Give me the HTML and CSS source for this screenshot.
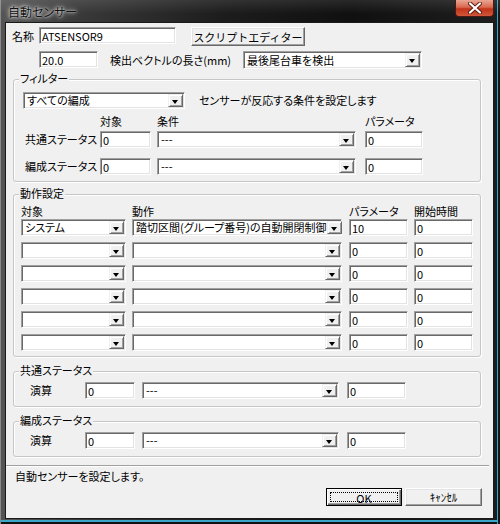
FILE: index.html
```html
<!DOCTYPE html>
<html lang="ja">
<head>
    <meta charset="UTF-8">
    <title>自動センサー</title>
    <link rel="stylesheet" href="styles.css">
</head>
<body>
    <div class="window">
        <div class="titlebar">
            <span class="title">自動センサー</span>
            <span class="close-btn">
                <svg width="16" height="12" viewBox="0 0 16 12">
                    <path d="M3 1.5 L13 10.5 M13 1.5 L3 10.5" stroke="#5a1a10" stroke-width="4" stroke-linecap="round"/>
                    <path d="M3 1.5 L13 10.5 M13 1.5 L3 10.5" stroke="#fff" stroke-width="2.2" stroke-linecap="round"/>
                </svg>
            </span>
        </div>

        <div class="client">
            <div class="row row-name">
                <span class="lbl lbl-name">名称</span>
                <input class="edit edit-name" type="text" value="ATSENSOR9">
                <button class="btn btn-script">スクリプトエディター</button>
            </div>

            <div class="row row-vec">
                <input class="edit edit-len" type="text" value="20.0">
                <span class="lbl lbl-len">検出ベクトルの長さ(mm)</span>
                <div class="combo combo-detect"><span class="combo-text">最後尾台車を検出</span><span class="drop"></span></div>
            </div>

            <!-- フィルター -->
            <div class="group group-filter">
                <span class="group-title">フィルター</span>
                <div class="filter-top">
                    <div class="combo combo-train"><span class="combo-text">すべての編成</span><span class="drop"></span></div>
                    <span class="lbl filter-note">センサーが反応する条件を設定します</span>
                </div>
                <div class="line cols-filter head">
                    <span></span>
                    <span>対象</span>
                    <span>条件</span>
                    <span>パラメータ</span>
                </div>
                <div class="line cols-filter first">
                    <span class="lbl">共通ステータス</span>
                    <input class="edit w51" type="text" value="0">
                    <div class="combo w199"><span class="combo-text">---</span><span class="drop"></span></div>
                    <input class="edit w58" type="text" value="0">
                </div>
                <div class="line cols-filter second">
                    <span class="lbl">編成ステータス</span>
                    <input class="edit w51" type="text" value="0">
                    <div class="combo w199"><span class="combo-text">---</span><span class="drop"></span></div>
                    <input class="edit w58" type="text" value="0">
                </div>
            </div>

            <!-- 動作設定 -->
            <div class="group group-action">
                <span class="group-title">動作設定</span>
                <div class="line cols-action head">
                    <span>対象</span>
                    <span>動作</span>
                    <span>パラメータ</span>
                    <span>開始時間</span>
                </div>
                <div class="line cols-action act first">
                    <div class="combo w105"><span class="combo-text">システム</span><span class="drop"></span></div>
                    <div class="combo w210"><span class="combo-text">踏切区間(グループ番号)の自動開閉制御</span><span class="drop"></span></div>
                    <input class="edit w59" type="text" value="10">
                    <input class="edit w59" type="text" value="0">
                </div>
                <div class="line cols-action act">
                    <div class="combo w105"><span class="combo-text"></span><span class="drop"></span></div>
                    <div class="combo w210"><span class="combo-text"></span><span class="drop"></span></div>
                    <input class="edit w59" type="text" value="0">
                    <input class="edit w59" type="text" value="0">
                </div>
                <div class="line cols-action act">
                    <div class="combo w105"><span class="combo-text"></span><span class="drop"></span></div>
                    <div class="combo w210"><span class="combo-text"></span><span class="drop"></span></div>
                    <input class="edit w59" type="text" value="0">
                    <input class="edit w59" type="text" value="0">
                </div>
                <div class="line cols-action act">
                    <div class="combo w105"><span class="combo-text"></span><span class="drop"></span></div>
                    <div class="combo w210"><span class="combo-text"></span><span class="drop"></span></div>
                    <input class="edit w59" type="text" value="0">
                    <input class="edit w59" type="text" value="0">
                </div>
                <div class="line cols-action act">
                    <div class="combo w105"><span class="combo-text"></span><span class="drop"></span></div>
                    <div class="combo w210"><span class="combo-text"></span><span class="drop"></span></div>
                    <input class="edit w59" type="text" value="0">
                    <input class="edit w59" type="text" value="0">
                </div>
                <div class="line cols-action act">
                    <div class="combo w105"><span class="combo-text"></span><span class="drop"></span></div>
                    <div class="combo w210"><span class="combo-text"></span><span class="drop"></span></div>
                    <input class="edit w59" type="text" value="0">
                    <input class="edit w59" type="text" value="0">
                </div>
            </div>

            <!-- 共通ステータス -->
            <div class="group group-status">
                <span class="group-title">共通ステータス</span>
                <div class="line cols-status">
                    <span class="lbl">演算</span>
                    <input class="edit w50" type="text" value="0">
                    <div class="combo w197"><span class="combo-text">---</span><span class="drop"></span></div>
                    <input class="edit w59" type="text" value="0">
                </div>
            </div>

            <!-- 編成ステータス -->
            <div class="group group-status">
                <span class="group-title">編成ステータス</span>
                <div class="line cols-status">
                    <span class="lbl">演算</span>
                    <input class="edit w50" type="text" value="0">
                    <div class="combo w197"><span class="combo-text">---</span><span class="drop"></span></div>
                    <input class="edit w59" type="text" value="0">
                </div>
            </div>

            <div class="separator"></div>
            <div class="status-text">自動センサーを設定します。</div>

            <div class="button-row">
                <button class="btn btn-default"><span class="focus">OK</span></button>
                <button class="btn btn-cancel">ｷｬﾝｾﾙ</button>
            </div>
        </div>
    </div>
</body>
</html>
```

FILE: styles.css
```css
body {
    margin: 0;
    background-color: #000;
    font-family: "Noto Sans CJK JP", "DejaVu Sans", sans-serif;
    font-size: 11px;
    font-feature-settings: "palt";
    color: #000;
}

.window {
    width: 500px;
    height: 524px;
    box-sizing: border-box;
    display: flex;
    flex-direction: column;
    padding: 0 7px 6px 6px;
    background: linear-gradient(to right, #555 0%, #3a3a3a 15%, #1c1c1c 45%, #101010 70%, #1e1e1e 100%);
    box-shadow: inset 1px 0 0 #8a8a8a, inset -2px 0 0 #151515, inset -3px 0 0 #3aa6c8,
                inset 0 -2px 0 #111, inset 0 -4px 0 #3aa6c8;
}

/* title bar */
.titlebar {
    height: 23px;
    margin: 0 -7px 0 -6px;
    padding-left: 8px;
    display: flex;
    justify-content: space-between;
    align-items: flex-start;
    background: linear-gradient(to bottom, rgba(255,255,255,0.10), rgba(255,255,255,0) 60%);
}

.title {
    line-height: 23px;
    font-size: 12px;
    color: #111;
    text-shadow: 0 0 4px #d8d8d8, 0 0 6px #bbb, 0 0 2px #eee;
}

.close-btn {
    width: 39px;
    height: 17px;
    margin-right: 6px;
    box-sizing: border-box;
    border: 1px solid #4a1a14;
    border-top: none;
    border-radius: 0 0 4px 4px;
    background: linear-gradient(to bottom, #e9a795 0%, #d9694e 45%, #c2341a 55%, #d2553a 100%);
    display: flex;
    align-items: center;
    justify-content: center;
}

/* client area */
.client {
    flex: 1;
    background-color: #f0f0f0;
    padding-top: 4px;
    box-shadow: 0 0 0 1px #1a1a1a;
}

.row {
    display: flex;
    align-items: flex-start;
}

.lbl {
    line-height: 17px;
    white-space: nowrap;
}

.row-name {
    height: 19px;
    padding-left: 6px;
}

.lbl-name {
    width: 27px;
    line-height: 18px;
}

.row-vec {
    height: 18px;
    margin-top: 5px;
    padding-left: 33px;
}

.lbl-len {
    width: 121px;
    margin-left: 12px;
    line-height: 18px;
}

/* edit boxes */
.edit {
    box-sizing: border-box;
    height: 17px;
    margin: 0;
    padding: 0 2px;
    font-family: inherit;
    font-size: 11px;
    color: #000;
    background-color: #fff;
    border: 1px solid;
    border-color: #a0a0a0 #fff #fff #a0a0a0;
    box-shadow: inset 1px 1px 0 #696969, inset -1px -1px 0 #e3e3e3;
    outline: none;
}

.edit-name { width: 137px; }
.edit-len { width: 59px; }

/* combo boxes */
.combo {
    box-sizing: border-box;
    height: 17px;
    display: flex;
    align-items: center;
    background-color: #fff;
    border: 1px solid;
    border-color: #a0a0a0 #fff #fff #a0a0a0;
    box-shadow: inset 1px 1px 0 #696969, inset -1px -1px 0 #e3e3e3;
    padding: 1px;
}

.combo-text {
    flex: 1;
    padding-left: 2px;
    line-height: 13px;
    white-space: nowrap;
}

.drop {
    position: relative;
    flex: none;
    width: 15px;
    height: 100%;
    box-sizing: border-box;
    background-color: #f0f0f0;
    border: 1px solid;
    border-color: #f0f0f0 #696969 #696969 #f0f0f0;
    box-shadow: inset 1px 1px 0 #fff, inset -1px -1px 0 #a0a0a0;
}

.drop::after {
    content: "";
    position: absolute;
    left: 3px;
    top: 5px;
    border-left: 3.5px solid transparent;
    border-right: 3.5px solid transparent;
    border-top: 4px solid #000;
}

.combo-detect {
    width: 179px;
    height: 18px;
    margin-left: 12px;
}

.w50 { width: 50px; }
.w51 { width: 51px; }
.w58 { width: 58px; }
.w59 { width: 59px; }
.w105 { width: 105px; }
.w197 { width: 197px; }
.w199 { width: 199px; }
.w210 { width: 210px; }

/* buttons */
.btn {
    box-sizing: border-box;
    margin: 0;
    padding: 0;
    font-family: inherit;
    font-size: 11px;
    color: #000;
    background-color: #f0f0f0;
    border: 1px solid;
    border-color: #fff #696969 #696969 #fff;
    box-shadow: inset -1px -1px 0 #a0a0a0, inset 1px 1px 0 #e3e3e3;
    white-space: nowrap;
}

.btn-script {
    width: 114px;
    height: 19px;
    margin-left: 15px;
}

/* group boxes */
.group {
    position: relative;
    width: 468px;
    margin-left: 7px;
    box-sizing: border-box;
    border: 1px solid #c6c6c6;
    border-radius: 3px;
    box-shadow: 1px 1px 0 #fff, inset 1px 1px 0 #fff;
}

.group-title {
    position: absolute;
    top: -9px;
    left: 5px;
    padding: 0 1px;
    line-height: 14px;
    background-color: #f0f0f0;
}

.group-filter {
    margin-top: 10px;
    padding: 12px 0 6px 0;
}

.filter-top {
    display: flex;
    height: 17px;
    padding-left: 9px;
}

.combo-train { width: 162px; }

.filter-note {
    margin-left: 14px;
}

.line {
    display: grid;
    align-items: center;
}

.line.head {
    height: 14px;
    line-height: 14px;
}

.cols-filter {
    grid-template-columns: 75px 57px 208px 58px;
    padding-left: 11px;
}

.cols-filter.head { margin-top: 5px; }
.cols-filter.first { margin-top: 3px; }
.cols-filter.second { margin-top: 10px; }

.group-action {
    margin-top: 12px;
    padding: 9px 0 5px 0;
}

.cols-action {
    grid-template-columns: 111px 217px 65px 59px;
    padding-left: 7px;
}

.cols-action.head { margin-bottom: 1px; }
.cols-action.act { margin-top: 6px; }
.cols-action.act.first { margin-top: 0; margin-bottom: 2px; }

.group-status {
    margin-top: 14px;
    padding: 10px 0 7px 0;
}

.cols-status {
    grid-template-columns: 55px 57px 205px 59px;
    padding-left: 16px;
}

/* bottom area */
.separator {
    margin: 8px 4px 0 0;
    border-top: 1px solid #a0a0a0;
    border-bottom: 1px solid #fff;
}

.status-text {
    margin-top: 2px;
    padding-left: 9px;
    line-height: 14px;
}

.button-row {
    display: flex;
    justify-content: flex-end;
    gap: 3px;
    margin-top: 5px;
    padding-right: 11px;
}

.btn-default {
    width: 76px;
    height: 18px;
    border: 1px solid #000;
    box-shadow: inset 1px 1px 0 #fff, inset -1px -1px 0 #696969, inset -2px -2px 0 #a0a0a0;
    padding: 3px;
}

.focus {
    display: block;
    height: 100%;
    box-sizing: border-box;
    border: 1px dotted #000;
    line-height: 10px;
}

.btn-cancel {
    width: 77px;
    height: 18px;
}
```
